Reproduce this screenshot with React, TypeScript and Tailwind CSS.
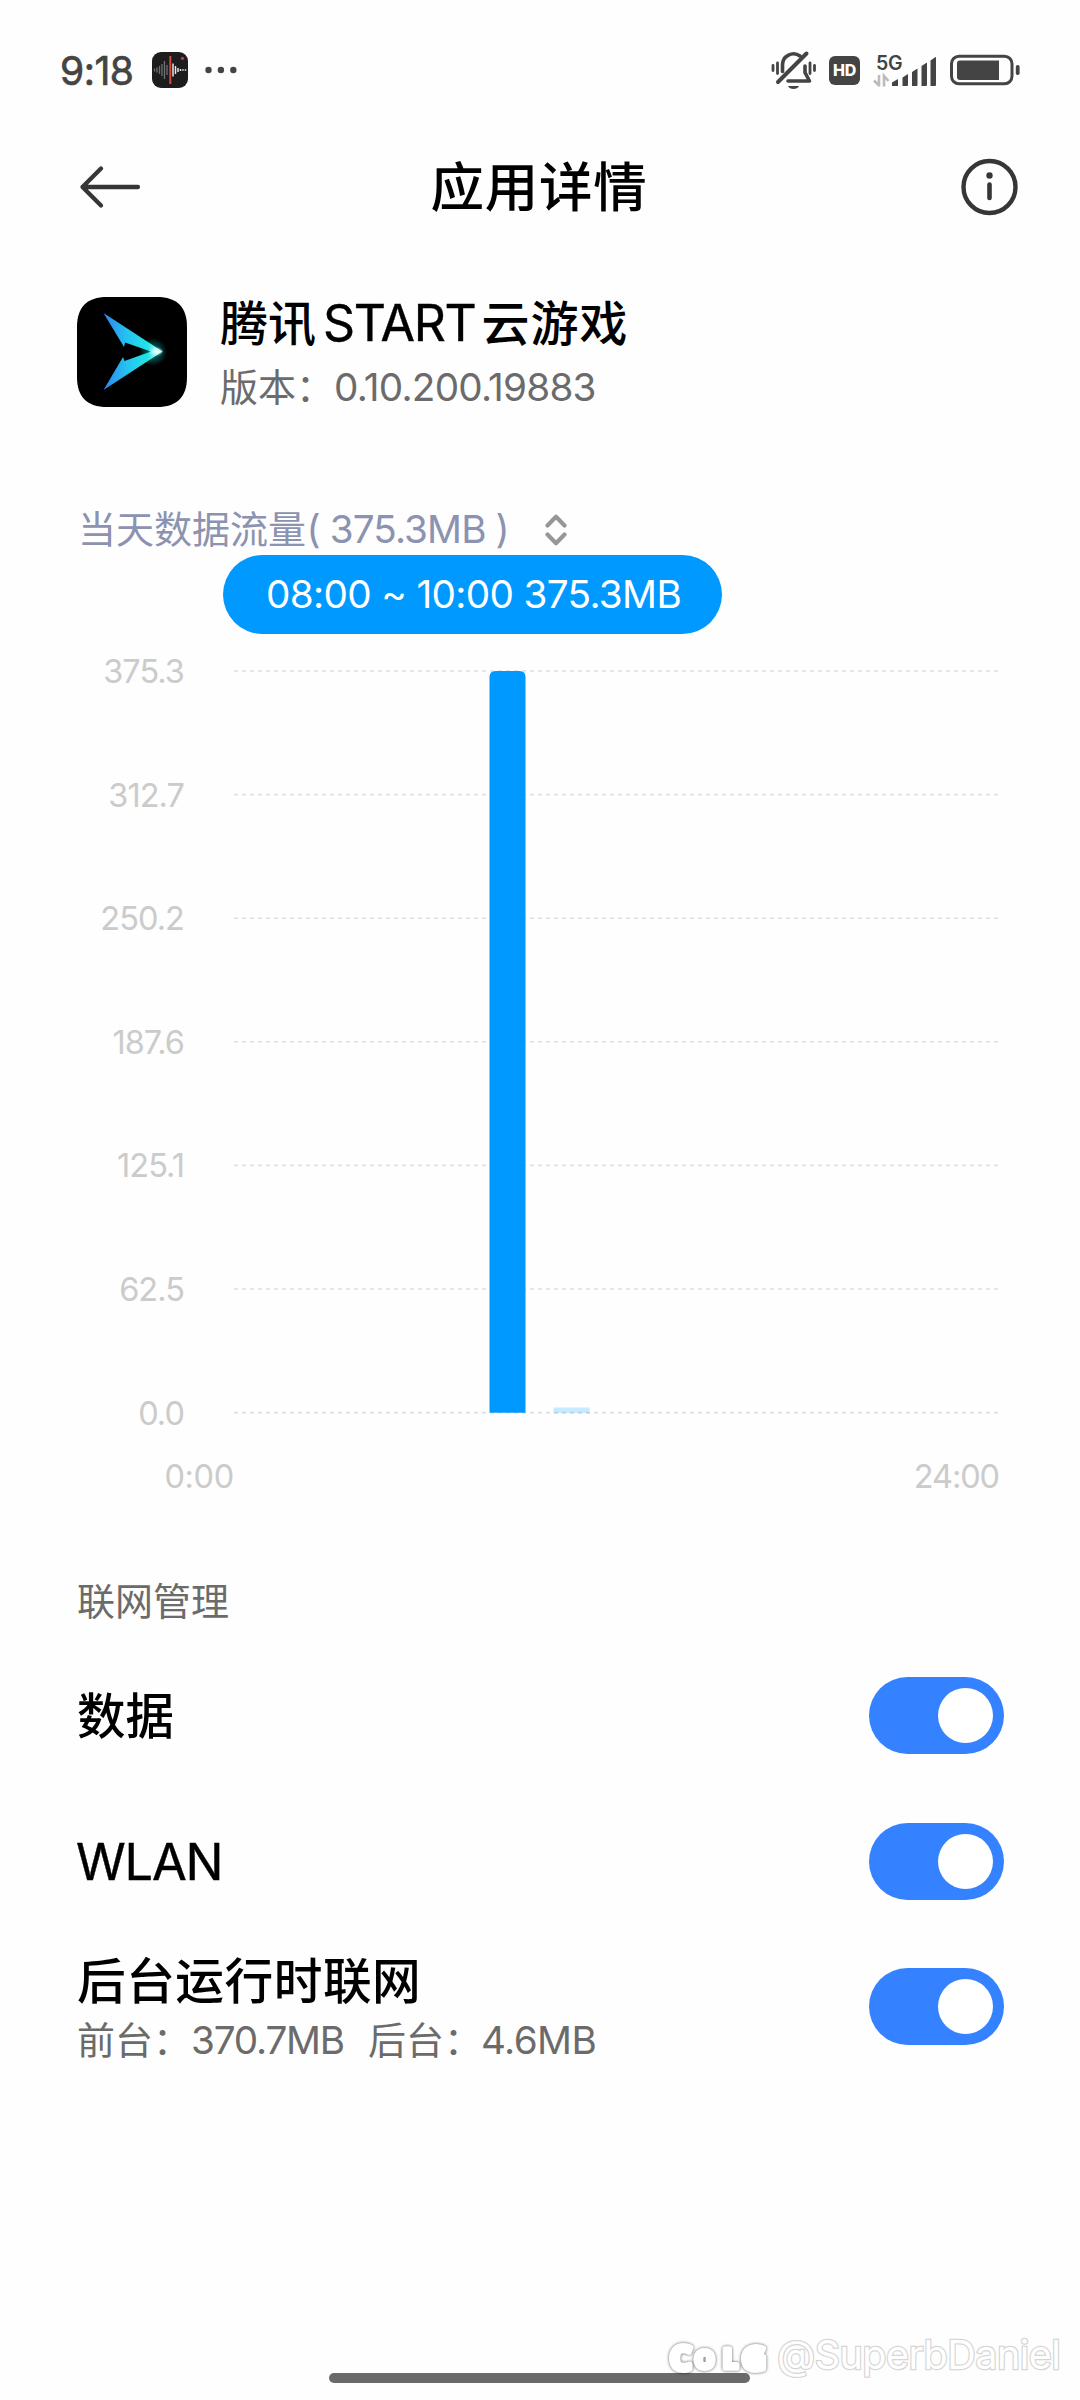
import type { ReactNode } from "react";

const CHART_LABELS = ["375.3", "312.7", "250.2", "187.6", "125.1", "62.5", "0.0"];
const ROW = 123.6;

function StatusBar() {
  return (
    <div className="flex h-[140px] items-center justify-between pl-[60px] pr-[60px] text-[#444]">
      <div className="flex items-center">
        <span className="w-[92px] text-[39px] leading-none tracking-[-0.5px] [-webkit-text-stroke:0.7px_#444]">9:18</span>
        <svg width="36" height="36" viewBox="0 0 36 36">
          <rect width="36" height="36" rx="9" fill="#1d1d1d" />
          <g stroke="#6e7076" strokeWidth="1.3">
            <path d="M2.5 16.5v3M5 15.500v5M7.500 14v8M10 12v12M12.500 9v18M15 13v10" />
          </g>
          <g stroke="#e8e8e8" strokeWidth="1.5">
            <path d="M21 11.500v13M23.500 14v8M26 16v4M28.500 17v2M31 17.300v1.500M33.500 17.300v1.500" />
          </g>
          <path d="M18.300 4v28" stroke="#d8483e" strokeWidth="2" />
          <circle cx="30.500" cy="6.300" r="1.600" fill="#d03a40" />
        </svg>
        <svg width="32" height="8" viewBox="0 0 32 8" className="ml-[17px]" fill="#444">
          <circle cx="3.500" cy="4" r="3.200" />
          <circle cx="15.900" cy="4" r="3.200" />
          <circle cx="28.300" cy="4" r="3.200" />
        </svg>
      </div>
      <div className="flex h-[40px] items-center">
        <svg width="46" height="40" viewBox="0 0 46 40" fill="none" stroke="#444" strokeLinecap="round">
          <path d="M2 15.500v5M6.500 13v10.500M43.500 15.500v5M39 13v10.500" strokeWidth="2.800" />
          <path d="M11.500 21.500V15a11 11 0 0 1 17.500-9" strokeWidth="3.600" />
          <path d="M34 16v6.500l4.500 8.500H17" strokeWidth="3.600" strokeLinejoin="round" />
          <path d="M35.500 3.500L7 32" strokeWidth="4" />
          <path d="M17 36h11c-1.500 4-9.500 4-11 0z" fill="#444" stroke="none" />
        </svg>
        <div className="ml-[12px] flex h-[29px] w-[31px] items-center justify-center rounded-[6px] bg-[#444] text-[16px] leading-none font-extrabold tracking-[-0.3px] text-white">
          HD
        </div>
        <div className="relative ml-[13px] h-[36px] w-[63px]">
          <svg width="63" height="36" viewBox="0 0 63 36">
            <g stroke="#bbb" strokeWidth="2.600" fill="none">
              <path d="M6 23v11.500M1 28.500l5 5M11 34.500V24l4.500 5" />
            </g>
            <g fill="#444">
              <path d="M19 34v-3.500l6-3.500v7zM29.500 34V25.500l5.500-3.500V33q0 1-1 1zM39 34V20l5.500-3.500V33q0 1-1 1zM48.500 34V14l5.500-3.500V33q0 1-1 1zM57.500 34V8.500L62.500 5q.5 0 .5 1V33q0 1-1 1z" />
            </g>
          </svg>
          <span className="absolute top-[1px] left-[3px] text-[19.5px] leading-[20px] font-semibold tracking-[-0.2px]">5G</span>
        </div>
        <svg width="70" height="32" viewBox="0 0 70 32" className="ml-[14px]">
          <rect x="1.500" y="2.200" width="60.500" height="27.600" rx="7.500" fill="none" stroke="#444" strokeWidth="3" />
          <path d="M10 6.500H49v19.500H10q-3 0-3-3V9.500q0-3 3-3z" fill="#444" />
          <rect x="65.800" y="11" width="3.800" height="10" rx="1.800" fill="#444" />
        </svg>
      </div>
    </div>
  );
}

function TitleBar() {
  return (
    <header className="flex h-[94px] items-center justify-between pr-[61px] pl-[79px]">
      <svg width="62" height="44" viewBox="0 0 62 44" fill="none" stroke="#363636" strokeWidth="4.300" strokeLinecap="round">
        <path d="M3.500 22H59M22 3.500L3.500 22L22 40.500" strokeLinejoin="round" />
      </svg>
      <h1 className="pt-[2px] pr-[22px] text-[53.5px] leading-[80px] font-medium tracking-[0.700px] text-black">应用详情</h1>
      <svg width="60" height="60" viewBox="0 0 60 60">
        <circle cx="30.500" cy="30" r="26" fill="none" stroke="#363636" strokeWidth="4.400" />
        <circle cx="30.500" cy="18.500" r="3.200" fill="#363636" />
        <path d="M30.500 27.500v13.500" stroke="#363636" strokeWidth="4.600" strokeLinecap="round" />
      </svg>
    </header>
  );
}

function AppLogo() {
  return (
    <svg width="110" height="110" viewBox="0 0 110 110">
      <defs>
        <linearGradient id="wing" x1="0" y1="0" x2="1" y2="0">
          <stop offset="0" stopColor="#2d84ee" />
          <stop offset=".4" stopColor="#25c3f0" />
          <stop offset=".75" stopColor="#1fe6e6" />
          <stop offset="1" stopColor="#fff" />
        </linearGradient>
        <radialGradient id="halo">
          <stop offset="0" stopColor="#0cc" stopOpacity=".7" />
          <stop offset="1" stopColor="#0cc" stopOpacity="0" />
        </radialGradient>
        <radialGradient id="spark">
          <stop offset="0" stopColor="#fff" />
          <stop offset="1" stopColor="#bff" stopOpacity="0" />
        </radialGradient>
      </defs>
      <path d="M30 0H80C100 0 110 10 110 30V80C110 100 100 110 80 110H30C10 110 0 100 0 80V30C0 10 10 0 30 0z" fill="#000" />
      <circle cx="76" cy="55" r="14" fill="url(#halo)" />
      <path d="M26.500 16L85.500 54.500L26.500 93L46 60L47.500 64L74 54.500L48 45.500L47 50z" fill="url(#wing)" />
      <ellipse cx="79" cy="54.500" rx="8" ry="5" fill="url(#spark)" />
    </svg>
  );
}

function AppInfo() {
  return (
    <section className="flex h-[128px] pt-[59px] box-content pl-[77px]">
      <div className="pt-[4px]">
        <AppLogo />
      </div>
      <div className="ml-[33px]">
        <h2 className="flex text-[48px] leading-[61px] font-medium text-black">
          <span>腾讯</span>
          <span className="ml-[7px] w-[158.500px] text-[50px] font-normal tracking-[-1.300px] [-webkit-text-stroke:0.4px_#000]">START</span>
          <span className="tracking-[1px]">云游戏</span>
        </h2>
        <p className="flex text-[38px] leading-[67px] text-[#6b6b6b]">
          <span>版本：</span>
          <span className="text-[38.700px] tracking-[-0.750px]">0.10.200.19883</span>
        </p>
      </div>
    </section>
  );
}

function TrafficChart() {
  return (
    <section>
      <div className="mt-[78px] flex h-[61px] items-center pl-[78px] text-[38px] leading-[61px] text-[#8c93b0]">
        <span>当天数据流量</span>
        <span className="w-[238.500px] pl-[0.500px] tracking-[-0.900px] text-[38.700px]">( 375.3MB )</span>
        <svg width="22" height="32" viewBox="0 0 22 32" fill="none" stroke="#979797" strokeWidth="4.200" strokeLinecap="round" strokeLinejoin="round">
          <path d="M2.500 11.500L11 2.800L19.500 11.500M2.500 20.500L11 29.200L19.500 20.500" />
        </svg>
      </div>
      <div className="relative pt-[49px]">
        <div className="absolute top-[-5px] left-[223px] flex h-[78.500px] w-[499px] items-center justify-center rounded-full bg-[#0099ff] pl-[2px] text-[38.700px] tracking-[-0.650px] whitespace-pre text-white">
          08:00 ~ 10:00 375.3MB
        </div>
        <div className="flex h-[847px]">
          <div className="w-[184px] pt-[1px] text-right text-[32.500px] tracking-[-0.950px] text-[#cbcbcb]">
            {CHART_LABELS.map((label) => (
              <div key={label} className="h-[123.600px] leading-[123.600px]">
                {label}
              </div>
            ))}
          </div>
          <svg width="768" height="847" viewBox="0 0 768 847" className="ml-[49px]">
            {CHART_LABELS.map((label, i) => (
              <path key={label} d={`M1 ${62 + i * ROW}H767`} stroke="#dedede" strokeWidth="1.600" strokeDasharray="4 4" />
            ))}
            <path d="M256.500 803.700V68q0-6 6-6H286.500q6 0 6 6V803.700z" fill="#0099ff" />
            <rect x="320.500" y="798.500" width="36" height="5.500" fill="#c9e9ff" />
            <path d="M321 803.600h36" stroke="#b3d6ea" strokeWidth="1.600" strokeDasharray="4 4" />
          </svg>
        </div>
        <div className="flex h-[41px] items-center justify-between pr-[81px] pl-[164.500px] text-[32.500px] leading-[41px] text-[#cbcbcb]">
          <span className="tracking-[-0.400px]">0:00</span>
          <span className="tracking-[-1.100px]">24:00</span>
        </div>
      </div>
    </section>
  );
}

function Toggle() {
  return (
    <div className="flex h-[77px] w-[134.500px] shrink-0 items-center justify-end rounded-full bg-[#3482ff] pr-[11px]">
      <div className="size-[55px] rounded-full bg-white" />
    </div>
  );
}

function SettingRow({ children }: { children: ReactNode }) {
  return (
    <div className="flex h-[145.500px] items-center justify-between pr-[76.500px] pl-[77px]">
      {children}
      <Toggle />
    </div>
  );
}

function NetworkSettings() {
  return (
    <section className="mt-[74px]">
      <h3 className="h-[72px] pl-[77px] text-[38px] leading-[60px] text-[#6b6b6b]">联网管理</h3>
      <SettingRow>
        <span className="pt-[2px] text-[48.500px] leading-[60px] font-medium text-black">数据</span>
      </SettingRow>
      <SettingRow>
        <span className="-ml-[1px] pt-[2px] text-[50.500px] leading-[60px] tracking-[-1.200px] text-black [-webkit-text-stroke:0.4px_#000]">WLAN</span>
      </SettingRow>
      <SettingRow>
        <div className="pt-[8px] leading-[58px]">
          <div className="text-[48.700px] font-medium tracking-[0.500px] text-black">后台运行时联网</div>
          <div className="flex text-[38px] text-[#6b6b6b]">
            <span>前台：</span>
            <span className="w-[177px] text-[38.700px] tracking-[-1.200px]">370.7MB</span>
            <span>后台：</span>
            <span className="-ml-[1px] text-[38.700px] tracking-[-0.600px]">4.6MB</span>
          </div>
        </div>
      </SettingRow>
    </section>
  );
}

function Watermark() {
  return (
    <div className="absolute top-[2325px] left-[660px] flex">
      <svg
        width="118"
        height="60"
        viewBox="0 0 118 60"
        className="drop-shadow-[0_0.5px_1.5px_rgba(0,0,0,0.65)]"
        fill="#fff"
        stroke="#fff"
        strokeLinejoin="round"
        fontFamily="'Open Sans', sans-serif"
        fontWeight="700"
      >
        <text x="10" y="45" fontSize="34" strokeWidth="6">C</text>
        <text x="35" y="42.500" fontSize="24" strokeWidth="6">O</text>
        <text x="63" y="42.500" fontSize="26" strokeWidth="5.500">L</text>
        <text x="82" y="45" fontSize="33" strokeWidth="6">G</text>
      </svg>
      <span className="-ml-[1px] pt-[1px] text-[39.500px] leading-[58px] tracking-[-0.500px] text-white [paint-order:stroke] [-webkit-text-stroke:2.5px_#d6d6d6]">
        @SuperbDaniel
      </span>
    </div>
  );
}

export default function App() {
  return (
    <div className="relative flex h-[2400px] w-[1080px] flex-col overflow-hidden bg-[#fefefe] font-['Inter','Noto_Sans_CJK_SC',sans-serif]">
      <StatusBar />
      <TitleBar />
      <AppInfo />
      <TrafficChart />
      <NetworkSettings />
      <div className="mt-auto mb-[17px] ml-[329px] h-[10px] w-[421px] rounded-full bg-[#6a6a6a]" />
      <Watermark />
    </div>
  );
}
